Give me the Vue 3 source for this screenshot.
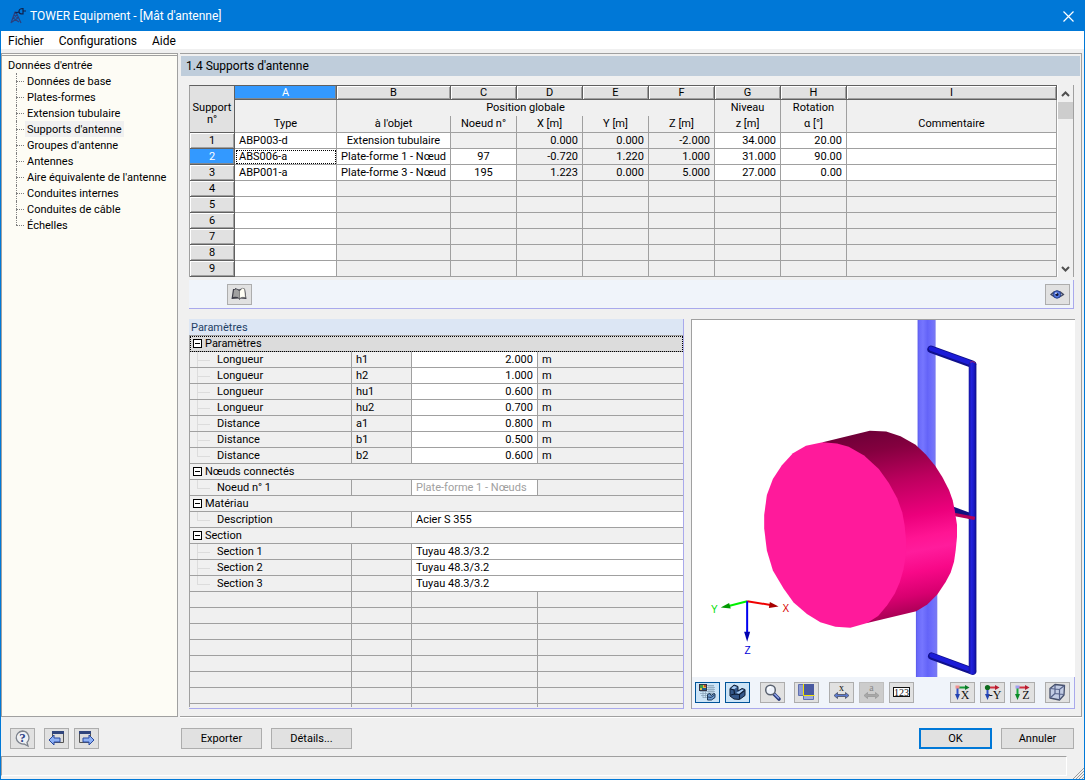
<script setup>
import { ref } from 'vue'

const menus = ['Fichier', 'Configurations', 'Aide']

const tree = [
  'Données de base',
  'Plates-formes',
  'Extension tubulaire',
  "Supports d'antenne",
  "Groupes d'antenne",
  'Antennes',
  "Aire équivalente de l'antenne",
  'Conduites internes',
  'Conduites de câble',
  'Échelles',
]
const activePage = ref("Supports d'antenne")

const letters = ['A', 'B', 'C', 'D', 'E', 'F', 'G', 'H', 'I']

const supports = [
  ['ABP003-d', 'Extension tubulaire', '', '0.000', '0.000', '-2.000', '34.000', '20.00', ''],
  ['ABS006-a', 'Plate-forme 1 - Nœud', '97', '-0.720', '1.220', '1.000', '31.000', '90.00', ''],
  ['ABP001-a', 'Plate-forme 3 - Nœud', '195', '1.223', '0.000', '5.000', '27.000', '0.00', ''],
  ...Array.from({ length: 6 }, () => Array(9).fill('')),
]
const currentRow = ref(1)

function cellClass(row, col) {
  const filled = row < 3
  const editable =
    col === 0 || (filled && (col === 1 || col > 5 || (col === 2 && supports[row][2] !== '')))
  return {
    editable,
    center: col === 1 || col === 2,
    number: col > 2 && col < 8,
    focused: col === 0 && row === currentRow.value,
  }
}

const groups = [
  {
    title: 'Paramètres',
    rows: [
      ['Longueur', 'h1', '2.000', 'm'],
      ['Longueur', 'h2', '1.000', 'm'],
      ['Longueur', 'hu1', '0.600', 'm'],
      ['Longueur', 'hu2', '0.700', 'm'],
      ['Distance', 'a1', '0.800', 'm'],
      ['Distance', 'b1', '0.500', 'm'],
      ['Distance', 'b2', '0.600', 'm'],
    ],
  },
  { title: 'Nœuds connectés', rows: [['Noeud n° 1', '', 'Plate-forme 1 - Nœuds', '']], disabled: true },
  { title: 'Matériau', rows: [['Description', '', 'Acier S 355']], wide: true },
  {
    title: 'Section',
    rows: [
      ['Section 1', '', 'Tuyau 48.3/3.2'],
      ['Section 2', '', 'Tuyau 48.3/3.2'],
      ['Section 3', '', 'Tuyau 48.3/3.2'],
    ],
    wide: true,
  },
]
</script>

<template>
  <div class="window">
    <header class="titlebar">
      <svg class="app-icon" viewBox="0 0 18 18" aria-hidden="true">
        <g fill="none" stroke="#2b3f7d" stroke-width="1.2">
          <path d="M2 16 6 5h1l5 11M4 11l6 4M9 11l-6 4M5 8l4 3M8 8l-4 3" />
        </g>
        <g fill="none" stroke="#10204a" stroke-width="1.2">
          <path d="M14 1.500c-3 0-4 1-4 3s1 2.500 4 2.500zM14 4h3M10 5 6 6" />
        </g>
      </svg>
      <h1>TOWER Equipment - [Mât d'antenne]</h1>
      <button class="close" type="button" aria-label="Fermer">
        <svg viewBox="0 0 11 11" aria-hidden="true"><path d="m.5.5 10 10m0-10-10 10" stroke="#fff" stroke-width="1.200" fill="none" /></svg>
      </button>
    </header>

    <nav class="menubar">
      <button v-for="m in menus" :key="m" type="button">{{ m }}</button>
    </nav>

    <div class="body">
      <aside class="sidebar">
        <div class="tree-root">Données d'entrée</div>
        <ul class="tree">
          <li v-for="t in tree" :key="t">
            <a href="#" :class="{ active: t === activePage }" @click.prevent="activePage = t">{{ t }}</a>
          </li>
        </ul>
      </aside>

      <main class="content">
        <h2 class="page-title">1.4 Supports d'antenne</h2>

        <div class="grid-wrap">
          <table class="grid">
            <colgroup>
              <col class="c-head" /><col class="c-type" /><col class="c-object" />
              <col v-for="n in 6" :key="n" class="c-num" />
              <col />
            </colgroup>
            <thead>
              <tr class="letters">
                <th rowspan="3" class="corner">Support<br />n°</th>
                <th v-for="l in letters" :key="l" class="letter" :class="{ selected: l === 'A' }">{{ l }}</th>
              </tr>
              <tr class="captions upper">
                <th></th>
                <th colspan="5">Position globale</th>
                <th>Niveau</th>
                <th>Rotation</th>
                <th></th>
              </tr>
              <tr class="captions lower">
                <th>Type</th>
                <th>à l'objet</th>
                <th>Noeud n°</th>
                <th>X [m]</th>
                <th>Y [m]</th>
                <th>Z [m]</th>
                <th>z [m]</th>
                <th>α [°]</th>
                <th>Commentaire</th>
              </tr>
            </thead>
            <tbody>
              <tr v-for="(row, r) in supports" :key="r" @click="currentRow = r">
                <th class="row-head" :class="{ selected: r === currentRow }">{{ r + 1 }}</th>
                <td v-for="(c, i) in row" :key="i" :class="cellClass(r, i)">{{ c }}</td>
              </tr>
            </tbody>
          </table>
          <div class="scrollbar">
            <button type="button" aria-label="Défiler vers le haut">
              <svg viewBox="0 0 9 6" aria-hidden="true"><path d="m1 5 3.500-3.500L8 5" fill="none" stroke="#505050" stroke-width="2" /></svg>
            </button>
            <div class="thumb"></div>
            <button class="down" type="button" aria-label="Défiler vers le bas">
              <svg viewBox="0 0 9 6" aria-hidden="true"><path d="m1 1 3.500 3.500L8 1" fill="none" stroke="#505050" stroke-width="2" /></svg>
            </button>
          </div>
        </div>

        <div class="strip">
          <button class="tool" type="button" aria-label="Bibliothèque">
            <svg viewBox="0 0 23 19" aria-hidden="true">
              <path d="m3.500 14 1.500-10h2v-1l4 1.500L15 3l2 1 1.500 10-6-.5-1 1.500-1-1.500z" fill="#3c3c46" />
              <path d="M6 5q3-2 5 1v7q-2-2-6-1z" fill="#a0a0a0" />
              <path d="m11.500 6 3-3 2 1 1 8.500q-4-1-6 1z" fill="#fffef4" stroke="#666" stroke-width=".5" />
            </svg>
          </button>
          <button class="tool" type="button" aria-label="Affichage">
            <svg viewBox="0 0 23 19" aria-hidden="true">
              <path d="M5 9.500Q11 3 17.500 9.500 11 15 5 9.500z" fill="#c8cde0" stroke="#444b63" stroke-width="1.300" />
              <circle cx="11" cy="9.500" r="3.700" fill="#5577dd" stroke="#25408c" />
              <circle cx="11" cy="9.500" r="1.500" fill="#101838" />
              <circle cx="10" cy="8.300" r=".8" fill="#fff" />
            </svg>
          </button>
        </div>

        <div class="lower-area">
          <section class="params">
            <h3>Paramètres</h3>
            <table class="props">
              <colgroup>
                <col class="p-name" /><col class="p-symbol" /><col class="p-value" /><col />
              </colgroup>
              <tbody v-for="(g, gi) in groups" :key="g.title">
                <tr class="group" :class="{ current: gi === 0 }">
                  <th colspan="4">
                    <button type="button" class="toggle" :aria-label="'Réduire ' + g.title"></button>{{ g.title }}
                  </th>
                </tr>
                <tr v-for="(p, i) in g.rows" :key="i">
                  <td class="name" :class="{ last: i === g.rows.length - 1 }">{{ p[0] }}</td>
                  <td class="symbol">{{ p[1] }}</td>
                  <td
                    class="value"
                    :class="{ number: gi === 0, disabled: g.disabled }"
                    :colspan="g.wide ? 2 : 1"
                  >{{ p[2] }}</td>
                  <td v-if="!g.wide" class="unit">{{ p[3] }}</td>
                </tr>
              </tbody>
              <tbody>
                <tr v-for="n in 7" :key="n"><td></td><td></td><td></td><td></td></tr>
                <tr class="partial"><td></td><td></td><td></td><td></td></tr>
              </tbody>
            </table>
          </section>

          <section class="viewer">
            <svg class="scene" viewBox="-144 15 1146 1071" preserveAspectRatio="xMidYMid slice" role="img" aria-label="Vue 3D du support d'antenne">
              <defs>
                <linearGradient id="mast" x1="0" x2="1" y1="0" y2="0">
                  <stop offset="0" stop-color="#5858e8" />
                  <stop offset=".08" stop-color="#6a6afa" />
                  <stop offset=".3" stop-color="#7676ff" />
                  <stop offset=".55" stop-color="#6464f8" />
                  <stop offset=".8" stop-color="#7070fc" />
                  <stop offset="1" stop-color="#7a7af0" />
                </linearGradient>
                <linearGradient id="pipe" x1="0" x2="1" y1="0" y2="0">
                  <stop offset="0" stop-color="#1414a0" />
                  <stop offset=".35" stop-color="#2222dc" />
                  <stop offset=".7" stop-color="#1818c4" />
                  <stop offset="1" stop-color="#0c0c80" />
                </linearGradient>
                <linearGradient id="drum" gradientUnits="userSpaceOnUse" x1="400" y1="350" x2="500" y2="900">
                  <stop offset="0" stop-color="#700038" />
                  <stop offset=".1" stop-color="#84003f" />
                  <stop offset=".28" stop-color="#bc005e" />
                  <stop offset=".48" stop-color="#ec007c" />
                  <stop offset=".6" stop-color="#ff1493" />
                  <stop offset=".67" stop-color="#ff1c9c" />
                  <stop offset=".78" stop-color="#f80888" />
                  <stop offset=".9" stop-color="#d80070" />
                  <stop offset="1" stop-color="#a80054" />
                </linearGradient>
              </defs>
              <rect x="531" y="15" width="54" height="520" fill="url(#mast)" />
              <rect x="526" y="820" width="64" height="266" fill="url(#mast)" />
              <g stroke-linecap="round">
                <path d="M571 104 695 149M573 1022l122 45" stroke="#10108c" stroke-width="22" />
                <path d="M571 102 695 147M573 1020l122 45" stroke="#1c1cd8" stroke-width="13" />
                <path d="m636 584 59 21" stroke="#101080" stroke-width="18" />
              </g>
              <rect x="684" y="141" width="23" height="935" rx="8" fill="url(#pipe)" />
              <path d="M688 143q8-6 16 2" fill="none" stroke="#d02040" stroke-width="2" />
              <path d="m640 598 62 12" stroke="#b40058" stroke-width="10" />
              <path
                d="M247 382 388 348 437 350 480 364 525 390 555 418 583 452 605 486 625 525 636 556 642 585 649 630 649 665 645 705 640 740 630 772 615 800 590 838 560 868 527 888 380 923 320 700z"
                fill="url(#drum)"
              />
              <path
                d="M247 382 290 386 325 396 371 422 415 462 445 504 470 550 485 592 492 628 497 680 496 718 489 762 478 800 463 835 440 870 413 902 380 923 330 937 285 934 240 921 200 896 160 862 130 820 98 766 80 706 72 640 72 600 80 540 98 492 125 451 158 415 197 393z"
                fill="#ff1a9b"
              />
              <g stroke-width="6">
                <path d="m21 858-55 14" stroke="#00f000" />
                <path d="m21 858 70 11" stroke="#f00000" />
                <path d="M21 858v96" stroke="#0000f0" />
              </g>
              <path d="m-58 877 25-14 5 17z" fill="#009a00" />
              <path d="m115 874-26-14-3 18z" fill="#a80000" />
              <path d="m21 979-9-30h18z" fill="#0000b0" />
              <g class="axis" text-anchor="middle">
                <text x="-77" y="893" fill="#00e000">Y</text>
                <text x="137" y="890" fill="#d80000">X</text>
                <text x="22" y="1017" fill="#0000d8">Z</text>
              </g>
            </svg>

            <div class="view-tools">
              <button class="tool on" type="button" aria-label="Modèle et rendu">
                <svg viewBox="0 0 23 19" aria-hidden="true">
                  <path d="M9 2.500h9M10 4.500h9M9 6.500h10M4 8.500h15M4 10.500h15M5 12.500h7M7 14.500h5M13 2v9M15 2v9M17 2v9M7 8v7M9.500 8v7" stroke="#86a0b4" stroke-width=".7" />
                  <rect x="3.500" y="1.500" width="7" height="6" fill="#e0c040" stroke="#334" />
                  <path d="M4 2h3v3H4z" fill="#3c9a50" /><path d="M6 5h4v2H6z" fill="#205c90" /><path d="M8 2h2v2H8z" fill="#c04830" />
                  <path d="m11.500 11.500 2.500-1 1 2 3-2 1 .5v3.500l-3.500 2.500h-4z" fill="#6f9cd0" stroke="#142c4c" stroke-width=".9" />
                  <path d="m12 14 3 .5 3.500-2.500" fill="none" stroke="#142c4c" stroke-width=".8" />
                </svg>
              </button>
              <button class="tool on" type="button" aria-label="Affichage solide">
                <svg viewBox="0 0 23 19" aria-hidden="true">
                  <path d="m4 5.500 4-3.500 4 1.500v4.500l4-2.500 3 1v6l-5.500 4-5.500-.5-4-3z" fill="#34588a" stroke="#0e1c33" stroke-linejoin="round" />
                  <path d="m5 5.500 3-2.500 3 1-3 2.500zM10 10l6-3.500 2 .5-5 4z" fill="#a8ccf2" />
                  <path d="m4.500 6 3.500 1 .5 4 5 .5 5-4M8.500 11l-3.500 1M13.500 11.500v4.500" fill="none" stroke="#0e1c33" stroke-width="1.100" />
                </svg>
              </button>
              <button class="tool gap-m" type="button" aria-label="Zoom">
                <svg viewBox="0 0 23 19" aria-hidden="true">
                  <path d="m13 11 5 5" stroke="#26387c" stroke-width="3.600" stroke-linecap="round" />
                  <path d="m13.500 11 4 4" stroke="#8ea2e4" stroke-width="1.600" stroke-linecap="round" />
                  <circle cx="9.500" cy="7" r="4.800" fill="#edf2fb" stroke="#5a6270" stroke-width="1.500" />
                  <path d="M7 7q0-3 3-3" fill="none" stroke="#fff" stroke-width="1.300" />
                </svg>
              </button>
              <button class="tool gap-s" type="button" aria-label="Fenêtres">
                <svg viewBox="0 0 23 19" aria-hidden="true">
                  <path d="M3.500 1.500h5v11h-5z" fill="#8d9ad2" stroke="#6070b0" />
                  <path d="M8.500 12.500h10v4h-10z" fill="#9daade" stroke="#6070b0" />
                  <path d="M9 1h10v11H9z" fill="#4a5aa0" />
                  <path d="M8.500 1v11.500h11" fill="none" stroke="#f4e400" />
                </svg>
              </button>
              <button class="tool gap-m" type="button" aria-label="Cote x">
                <svg viewBox="0 0 23 19" aria-hidden="true">
                  <text x="11.500" y="8" text-anchor="middle" class="glyph">x</text>
                  <path d="m4 12.500 3.500-3v2h8v-2l3.500 3-3.500 3v-2h-8v2z" fill="#5c7ad0" stroke="#4a4f62" stroke-width=".8" />
                </svg>
              </button>
              <button class="tool off" type="button" disabled aria-label="Cote a">
                <svg viewBox="0 0 23 19" aria-hidden="true">
                  <text x="11.500" y="8" text-anchor="middle" class="glyph muted">a</text>
                  <path d="m4 12.500 3.500-3v2h8v-2l3.500 3-3.500 3v-2h-8v2z" fill="#a8a8a8" stroke="#999" stroke-width=".8" />
                </svg>
              </button>
              <button class="tool" type="button" aria-label="Numérotation">
                <svg viewBox="0 0 23 19" aria-hidden="true">
                  <rect x="3.500" y="4.500" width="16" height="9" fill="#fff" stroke="#111" />
                  <text x="11.500" y="12.500" text-anchor="middle" class="glyph">123</text>
                </svg>
              </button>
              <button class="tool push" type="button" aria-label="Vue X">
                <svg viewBox="0 0 23 19" aria-hidden="true">
                  <path d="M7 4.500h8" stroke="#189a38" stroke-width="2" /><path d="m14 2 4.500 2.500L14 7z" fill="#0c7a28" />
                  <path d="M6.500 5v7" stroke="#3050c8" stroke-width="2" /><path d="M4 11h5l-2.500 6z" fill="#2444b0" />
                  <rect x="4.500" y="2.500" width="4" height="3" fill="#f09090" />
                  <text x="14" y="16" text-anchor="middle" class="glyph big">X</text>
                </svg>
              </button>
              <button class="tool" type="button" aria-label="Vue -Y">
                <svg viewBox="0 0 23 19" aria-hidden="true">
                  <path d="M7 4.500h8" stroke="#d03040" stroke-width="2" /><path d="m14 2 4.500 2.500L14 7z" fill="#b81c30" />
                  <path d="M6.500 5v7" stroke="#3050c8" stroke-width="2" /><path d="M4 11h5l-2.500 6z" fill="#2444b0" />
                  <circle cx="6.500" cy="4.500" r="2.600" fill="#0c6a1c" />
                  <text x="14" y="16" text-anchor="middle" class="glyph big">-Y</text>
                </svg>
              </button>
              <button class="tool" type="button" aria-label="Vue Z">
                <svg viewBox="0 0 23 19" aria-hidden="true">
                  <path d="M7 4.500h8" stroke="#d03040" stroke-width="2" /><path d="m14 2 4.500 2.500L14 7z" fill="#b81c30" />
                  <path d="M6.500 5v7" stroke="#18a838" stroke-width="2" /><path d="M4 11h5l-2.500 6z" fill="#0c8a28" />
                  <rect x="4.500" y="2.500" width="4" height="3" fill="#a0a0f0" />
                  <text x="15" y="16" text-anchor="middle" class="glyph big">Z</text>
                </svg>
              </button>
              <button class="tool gap-m" type="button" aria-label="Vue isométrique">
                <svg viewBox="0 0 23 19" aria-hidden="true">
                  <path d="m4 5.500 5-4 9.500 1-.5 9.500-4.500 5L4 15z" fill="#c2cce4" stroke="#46506c" stroke-width="1.300" stroke-linejoin="round" />
                  <path d="m4 5.500 9.500 1 5-4M13.500 6.500V17M9 2v8.500l9 1M9 10.500 4 15" fill="none" stroke="#56628a" stroke-width="1.200" />
                </svg>
              </button>
            </div>
          </section>
        </div>
      </main>
    </div>

    <footer class="actions">
      <button class="tool" type="button" aria-label="Aide">
        <svg viewBox="0 0 23 19" aria-hidden="true">
          <path d="M11.500 2a7 6.500 0 1 0 1.500 13l4 2-1-3.500A6.800 6.800 0 0 0 11.500 2z" fill="#eef0f4" stroke="#7c828c" stroke-width="1.300" />
          <text x="11.500" y="13" text-anchor="middle" class="glyph help">?</text>
        </svg>
      </button>
      <button class="tool gap-a" type="button" aria-label="Page précédente">
        <svg viewBox="0 0 23 19" aria-hidden="true">
          <path d="M7.500 2.500h11v11h-11z" fill="#dcdcdc" stroke="#555" /><path d="M7 2h12v3H7z" fill="#30457c" />
          <path d="m4 11 5-5v3h6v4H9v3z" fill="#8db0f4" stroke="#2848a0" stroke-linejoin="round" />
        </svg>
      </button>
      <button class="tool gap-b" type="button" aria-label="Page suivante">
        <svg viewBox="0 0 23 19" aria-hidden="true">
          <path d="M4.500 2.500h11v11h-11z" fill="#dcdcdc" stroke="#555" /><path d="M4 2h12v3H4z" fill="#30457c" />
          <path d="m19 11-5-5v3H8v4h6v3z" fill="#8db0f4" stroke="#2848a0" stroke-linejoin="round" />
        </svg>
      </button>
      <button class="btn export" type="button">Exporter</button>
      <button class="btn details" type="button">Détails...</button>
      <button class="btn ok" type="button">OK</button>
      <button class="btn cancel" type="button">Annuler</button>
    </footer>

    <div class="statusbar">
      <div class="status-pane"></div>
      <svg class="grip" viewBox="0 0 12 12" aria-hidden="true"><path d="M1 12 12 1M4 12l8-8M7 12l5-5M10 12l2-2" stroke="#999" fill="none" /></svg>
    </div>
  </div>
</template>

<style>
body {
  margin: 0;
}
</style>

<style scoped>
* {
  box-sizing: border-box;
}
.window {
  display: flex;
  flex-direction: column;
  min-height: 100vh;
  background: #f0f0f0;
  border: 1px solid #0078d7;
  color: #000;
  font: 12px/16px Roboto, 'Open Sans', sans-serif;
}
button {
  font: inherit;
  color: inherit;
  padding: 0;
  margin: 0;
  border: 0;
  background: none;
  border-radius: 0;
}
h1,
h2,
h3 {
  margin: 0;
  font-size: 12px;
  font-weight: 400;
}
.titlebar {
  display: flex;
  align-items: center;
  height: 30px;
  padding: 0 10px 0 8px;
  background: #0078d7;
  color: #fff;
}
.app-icon {
  width: 18px;
  height: 18px;
  margin-right: 3px;
}
.close {
  display: flex;
  margin-left: auto;
}
.close svg {
  width: 11px;
  height: 11px;
}
.menubar {
  display: flex;
  gap: 15px;
  height: 18px;
  padding: 2px 7px 0;
  background: #fff;
}
.body {
  flex: 1;
  display: grid;
  grid-template-columns: 177px minmax(0, 1fr);
  gap: 2px;
  margin-top: 4px;
}
.sidebar {
  border: 1px solid #a0a0a0;
  border-top: 3px double #a0a0a0;
  background: #fdfcf5;
  padding: 1px 6px;
  font-size: 11px;
  line-height: 18px;
  white-space: nowrap;
}
.tree-root {
  height: 16px;
}
.tree {
  margin: 0;
  padding: 0 0 0 8px;
  list-style: none;
}
.tree li {
  position: relative;
  height: 16px;
  padding-left: 9px;
}
.tree li::before {
  content: '';
  position: absolute;
  left: 0;
  top: 0;
  width: 8px;
  height: 8px;
  border-bottom: 1px dotted #808080;
}
.tree li::after {
  content: '';
  position: absolute;
  left: 0;
  top: 0;
  height: 16px;
  border-left: 1px dotted #808080;
}
.tree li:last-child::after {
  height: 8px;
}
.tree a {
  display: block;
  width: fit-content;
  height: 16px;
  padding: 0 2px;
  color: #000;
  text-decoration: none;
}
.tree a.active {
  background: #f0f0f0;
}
.content {
  display: flex;
  flex-direction: column;
  margin-right: 2px;
  padding-bottom: 7px;
  border: 1px solid #a0a0a0;
  border-width: 1px 1px 1px 0;
  box-shadow: 0 1px #fff;
}
.page-title {
  margin: 2px 1px 9px;
  padding-left: 5px;
  height: 20px;
  line-height: 20px;
  background: #bfcddb;
}
.grid-wrap,
.strip,
.lower-area {
  margin: 0 7px 0 9px;
}
.grid-wrap {
  display: flex;
  border-right: 1px solid #a0a0a0;
}
table {
  border-collapse: separate;
  border-spacing: 0;
  table-layout: fixed;
  width: 100%;
  font-size: 11px;
  line-height: 14px;
}
th {
  font-weight: 400;
}
.grid {
  flex: 1;
  border-top: 1px solid #606060;
  border-left: 1px solid #a0a0a0;
}
.c-head {
  width: 45px;
}
.c-type {
  width: 102px;
}
.c-object {
  width: 114px;
}
.c-num {
  width: 66px;
}
.grid th,
.grid td {
  height: 16px;
  padding: 1px 4px 0;
  border-right: 1px solid #a0a0a0;
  border-bottom: 1px solid #a0a0a0;
  white-space: nowrap;
  overflow: hidden;
}
.grid th {
  padding: 0;
  text-align: center;
}
.grid .corner {
  padding-top: 9px;
  background: #e1e1e1;
  border-color: #606060;
  line-height: 12px;
}
.grid .letter {
  height: 14px;
  line-height: 13px;
  background: #e1e1e1;
  border-color: #606060;
  box-shadow: inset 1px 1px #fff, inset -1px -1px #a0a0a0;
}
.grid .upper th {
  border-bottom: 0;
}
.grid .lower th {
  height: 17px;
  line-height: 16px;
}
.grid .row-head {
  background: #e1e1e1;
  border-color: #606060;
  box-shadow: inset 1px 1px #fff, inset -1px -1px #a0a0a0;
}
.grid .selected {
  background: #3399ff;
  color: #fff;
  box-shadow: inset -1px -1px #808890;
}
.editable {
  background: #fff;
}
.center {
  text-align: center;
}
.number {
  text-align: right;
}
.grid .focused {
  outline: 1px dotted #000;
  outline-offset: -2px;
}
.scrollbar {
  display: flex;
  flex-direction: column;
  width: 16px;
  border-left: 1px solid #fff;
}
.scrollbar button {
  display: flex;
  align-items: center;
  justify-content: center;
  height: 17px;
}
.scrollbar svg {
  width: 9px;
  height: 6px;
}
.thumb {
  height: 17px;
  background: #cdcdcd;
}
.scrollbar .down {
  margin-top: auto;
}
.strip {
  display: flex;
  justify-content: space-between;
  margin-top: 3px;
  padding: 4px 3px 3px 38px;
  background: #f0f4fa;
  border: 1px solid #a9a9ec;
  border-width: 0 1px 1px 0;
}
.tool {
  display: flex;
  align-items: center;
  justify-content: center;
  width: 25px;
  height: 21px;
  background: #e1e1e1;
  border: 1px solid #adadad;
}
.tool svg {
  width: 23px;
  height: 19px;
}
.tool.on {
  background: #cce4f7;
  border-color: #005499;
}
.tool.off {
  background: #ccc;
  border-color: #bfbfbf;
}
.lower-area {
  flex: 1;
  display: grid;
  grid-template-columns: 495fr 384fr;
  gap: 7px;
  margin-top: 10px;
  margin-right: 6px;
}
.params {
  background: #f0f0f0;
  border-right: 1px solid #a9a9ec;
  border-bottom: 1px solid #a9a9ec;
}
.params h3 {
  height: 16px;
  padding-left: 2px;
  background: #dce6f4;
  color: #1f3f66;
  font-size: 11px;
  line-height: 18px;
}
.props {
  border-top: 1px solid #a0a0a0;
  border-left: 1px solid #a0a0a0;
}
.p-name {
  width: 162px;
}
.p-symbol {
  width: 60px;
}
.p-value {
  width: 126px;
}
.props th,
.props td {
  height: 16px;
  padding: 1px 4px 0;
  border-right: 1px solid #a0a0a0;
  border-bottom: 1px solid #a0a0a0;
  text-align: left;
  white-space: nowrap;
}
.props th:last-child,
.props td:last-child {
  border-right: 0;
}
.props .group th {
  padding-left: 3px;
}
.props .symbol {
  padding-top: 0;
}
.props .current th {
  background: #dcdcdc;
  outline: 1px dotted #000;
  outline-offset: -1px;
}
.toggle {
  display: inline-block;
  width: 9px;
  height: 9px;
  margin-right: 3px;
  border: 1px solid #000;
  background: linear-gradient(#000, #000) center / 5px 1px no-repeat #fff;
}
.props .name {
  position: relative;
  padding-left: 27px;
}
.name::before {
  content: '';
  position: absolute;
  left: 7px;
  top: 0;
  width: 12px;
  height: 8px;
  border-left: 1px solid #dcdcdc;
  border-bottom: 1px solid #dcdcdc;
}
.name:not(.last)::after {
  content: '';
  position: absolute;
  left: 7px;
  top: 8px;
  height: 7px;
  border-left: 1px solid #dcdcdc;
}
.props .value {
  background: #fff;
}
.props .number {
  text-align: right;
}
.props .disabled {
  color: #a0a0a0;
}
.props .partial td {
  height: 3px;
  border-bottom: 0;
}
.viewer {
  display: flex;
  flex-direction: column;
  border: 1px solid #a0a0a0;
  border-width: 1px 0 0 1px;
}
.scene {
  flex: 1 1 0;
  display: block;
  width: 100%;
  min-height: 357px;
  background: #fff;
}
.axis {
  font: 30px 'Liberation Sans', Arial, sans-serif;
}
.view-tools {
  display: flex;
  gap: 5px;
  padding: 5px 4px 5px 3px;
  background: #f0f4fa;
  border: 1px solid #a9a9ec;
  border-width: 0 1px 1px 0;
}
.gap-m {
  margin-left: 5px;
}
.gap-s {
  margin-left: 4px;
}
.push {
  margin-left: auto;
}
.glyph {
  font: 10px 'Liberation Serif', serif;
  fill: #111;
}
.glyph.muted {
  fill: #888;
}
.glyph.big {
  font-size: 12px;
}
.glyph.help {
  font-size: 13px;
  font-weight: 700;
  fill: #2c4088;
}
.actions {
  display: flex;
  align-items: center;
  padding: 11px 10px 7px 9px;
}
.gap-a {
  margin-left: 9px;
}
.gap-b {
  margin-left: 5px;
}
.btn {
  height: 21px;
  background: #e1e1e1;
  border: 1px solid #adadad;
  font-size: 11px;
}
.export {
  width: 81px;
  margin-left: 82px;
}
.details {
  width: 81px;
  margin-left: 9px;
}
.ok {
  width: 73px;
  margin-left: auto;
  border: 2px solid #0078d7;
}
.cancel {
  width: 73px;
  margin-left: 9px;
}
.statusbar {
  position: relative;
  height: 23px;
  padding-right: 17px;
}
.status-pane {
  height: 20px;
  border: 1px solid #fff;
  border-top-color: #a0a0a0;
  border-left-color: #a0a0a0;
}
.grip {
  position: absolute;
  right: 0;
  bottom: 0;
  width: 12px;
  height: 12px;
}
</style>
